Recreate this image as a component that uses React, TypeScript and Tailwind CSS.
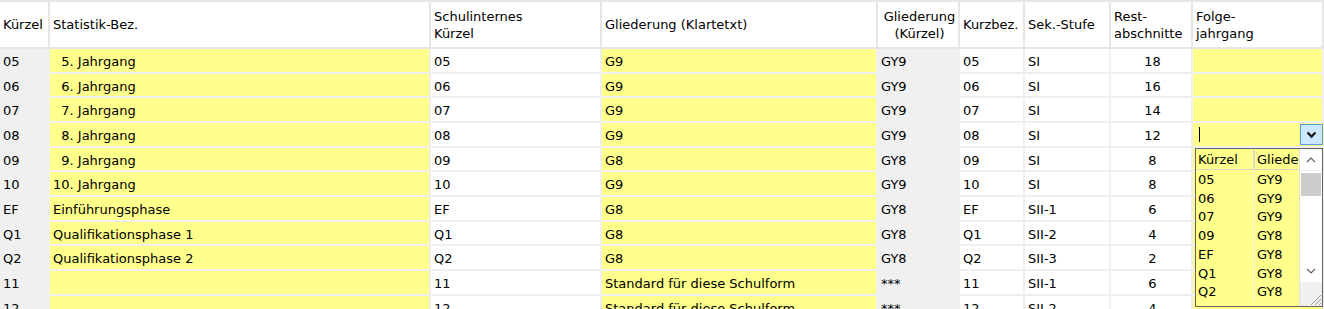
import React from "react";

type Row = {
  k: string;
  stat: string;
  intern: string;
  glied: string;
  gk: string;
  kurz: string;
  sek: string;
  rest: string;
};

const FS = "\u2007";

const rows: Row[] = [
  { k: "05", stat: FS + "5. Jahrgang", intern: "05", glied: "G9", gk: "GY9", kurz: "05", sek: "SI", rest: "18" },
  { k: "06", stat: FS + "6. Jahrgang", intern: "06", glied: "G9", gk: "GY9", kurz: "06", sek: "SI", rest: "16" },
  { k: "07", stat: FS + "7. Jahrgang", intern: "07", glied: "G9", gk: "GY9", kurz: "07", sek: "SI", rest: "14" },
  { k: "08", stat: FS + "8. Jahrgang", intern: "08", glied: "G9", gk: "GY9", kurz: "08", sek: "SI", rest: "12" },
  { k: "09", stat: FS + "9. Jahrgang", intern: "09", glied: "G8", gk: "GY8", kurz: "09", sek: "SI", rest: "8" },
  { k: "10", stat: "10. Jahrgang", intern: "10", glied: "G9", gk: "GY9", kurz: "10", sek: "SI", rest: "8" },
  { k: "EF", stat: "Einführungsphase", intern: "EF", glied: "G8", gk: "GY8", kurz: "EF", sek: "SII-1", rest: "6" },
  { k: "Q1", stat: "Qualifikationsphase 1", intern: "Q1", glied: "G8", gk: "GY8", kurz: "Q1", sek: "SII-2", rest: "4" },
  { k: "Q2", stat: "Qualifikationsphase 2", intern: "Q2", glied: "G8", gk: "GY8", kurz: "Q2", sek: "SII-3", rest: "2" },
  { k: "11", stat: "", intern: "11", glied: "Standard für diese Schulform", gk: "***", kurz: "11", sek: "SII-1", rest: "6" },
  { k: "12", stat: "", intern: "12", glied: "Standard für diese Schulform", gk: "***", kurz: "12", sek: "SII-2", rest: "4" },
];

const dropItems = [
  ["05", "GY9"],
  ["06", "GY9"],
  ["07", "GY9"],
  ["09", "GY8"],
  ["EF", "GY8"],
  ["Q1", "GY8"],
  ["Q2", "GY8"],
];

const cols = "grid grid-cols-[50px_381px_171px_276px_82px_65px_86px_82px_131px]";
const hcell = "border-r-2 border-[#e6e6e6] bg-white pl-[3px] flex flex-col justify-center leading-[17px]";
const dcell = "border-r-2 border-b-2 border-[#efefef] pl-[3px] pt-[3px] flex items-center whitespace-nowrap overflow-hidden";
const yellow = "bg-[#ffff8c]";
const grey = "bg-[#f0f0f0]";

export default function App() {
  return (
    <div
      className="relative w-[1324px] h-[309px] overflow-hidden bg-white text-[13px] text-black"
      style={{ fontFamily: '"DejaVu Sans", Verdana, sans-serif' }}
    >
      {/* header */}
      <div className={`${cols} h-[49px] border-t-2 border-b-2 border-[#e6e6e6]`}>
        <div className={hcell}>Kürzel</div>
        <div className={hcell}>Statistik-Bez.</div>
        <div className={hcell}>
          <span>Schulinternes</span>
          <span>Kürzel</span>
        </div>
        <div className={hcell}>Gliederung (Klartetxt)</div>
        <div className={`${hcell} items-center pl-0`}>
          <span>Gliederung</span>
          <span>(Kürzel)</span>
        </div>
        <div className={hcell}>Kurzbez.</div>
        <div className={hcell}>Sek.-Stufe</div>
        <div className={hcell}>
          <span>Rest-</span>
          <span>abschnitte</span>
        </div>
        <div className={`${hcell} border-r-0`}>
          <span>Folge-</span>
          <span>jahrgang</span>
        </div>
      </div>

      {/* rows */}
      {rows.map((r, i) => (
        <div key={r.k} className={`${cols} h-[24.67px]`}>
          <div className={`${dcell} ${grey}`}>{r.k}</div>
          <div className={`${dcell} ${yellow}`}>{r.stat}</div>
          <div className={`${dcell} bg-white`}>{r.intern}</div>
          <div className={`${dcell} ${yellow}`}>{r.glied}</div>
          <div className={`${dcell} ${grey}`}>{r.gk}</div>
          <div className={`${dcell} bg-white`}>{r.kurz}</div>
          <div className={`${dcell} bg-white`}>{r.sek}</div>
          <div className={`${dcell} bg-white justify-center pl-0`}>{r.rest}</div>
          {i === 3 ? (
            <div className={`${yellow} border-b-2 border-[#efefef] flex items-center pl-[6px] pr-[1px] pt-[1px] justify-between`}>
              <span className="w-px h-[15px] bg-black" />
              <span className="w-[23px] h-[21px] bg-[#cce8ff] border border-[#569de5] flex items-center justify-center">
                <svg width="11" height="8" viewBox="0 0 11 8">
                  <path d="M1.5 1.5 L5.5 5.5 L9.5 1.5" fill="none" stroke="#1a1a1a" strokeWidth="2.4" />
                </svg>
              </span>
            </div>
          ) : (
            <div className={`${dcell} ${yellow} border-r-0`}></div>
          )}
        </div>
      ))}

      {/* dropdown list */}
      <div className="absolute left-[1195px] top-[148px] w-[128px] h-[159px] border border-[#646464] bg-[#ffff8c] flex">
        <div className="flex-1 flex flex-col">
          <div className="flex h-[21px] border-b border-[#d9d9c0] pt-[1px]">
            <div className="w-[59px] border-r-2 border-[#dcdcc8] pl-[2px] flex items-center">Kürzel</div>
            <div className="flex-1 pl-[2px] flex items-center overflow-hidden whitespace-nowrap">Gliede</div>
          </div>
          {dropItems.map(([a, b]) => (
            <div key={a} className="flex h-[18.7px] pt-[1px]">
              <div className="w-[59px] border-r-2 border-[#f4f4c0] pl-[2px] flex items-center">{a}</div>
              <div className="flex-1 pl-[2px] flex items-center">{b}</div>
            </div>
          ))}
        </div>
        {/* scrollbar */}
        <div className="w-[25px] flex flex-col bg-white border-l border-[#e3e3e3]">
          <div className="h-[22px] flex items-center justify-center border-b border-[#f0f0f0]">
            <svg width="10" height="6" viewBox="0 0 10 6">
              <path d="M1 5 L5 1 L9 5" fill="none" stroke="#606060" strokeWidth="1.2" />
            </svg>
          </div>
          <div className="h-[2px]" />
          <div className="h-[23px] bg-[#cdcdcd] mx-[1px]" />
          <div className="flex-1" />
          <div className="h-[23px] flex items-center justify-center">
            <svg width="10" height="6" viewBox="0 0 10 6">
              <path d="M1 1 L5 5 L9 1" fill="none" stroke="#606060" strokeWidth="1.2" />
            </svg>
          </div>
          <div className="h-[24px] bg-[#f0f0f0] flex items-end justify-end">
            <svg width="14" height="14" viewBox="0 0 14 14">
              <path d="M13 3 L3 13 M13 7 L7 13 M13 11 L11 13" stroke="#9a9a9a" strokeWidth="1" />
            </svg>
          </div>
        </div>
      </div>
    </div>
  );
}
